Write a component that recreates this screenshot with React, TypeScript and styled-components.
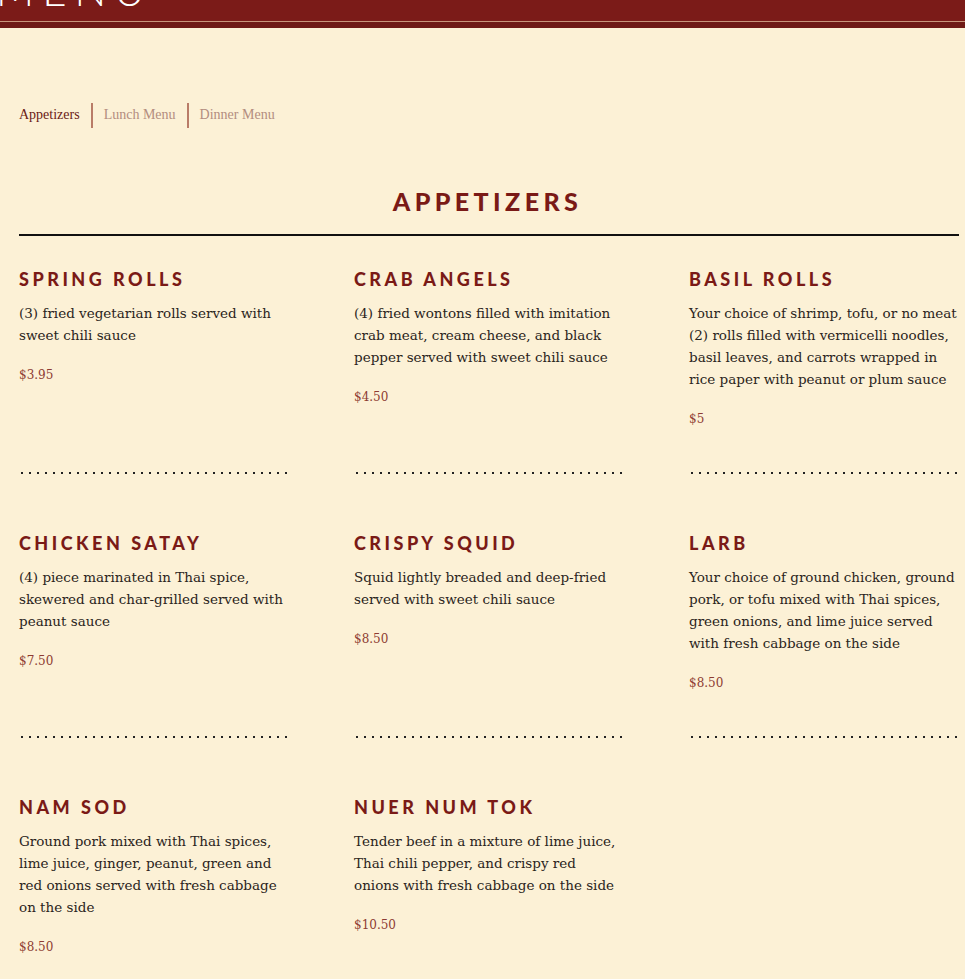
import React from "react";
import styled, { createGlobalStyle } from "styled-components";

const Global = createGlobalStyle`
  html, body { margin: 0; padding: 0; background: #fcf1d6; }
  * { box-sizing: border-box; }
`;

const Page = styled.div`
  min-height: 979px;
  background: #fcf1d6;
`;

const Header = styled.header`
  height: 22px;
  background: #7b1b18;
  overflow: hidden;
  border-bottom: 1px solid #c9967c;
`;

const HeaderBand = styled.div`
  height: 6px;
  background: #6f1a16;
`;

const Brand = styled.div`
  margin-top: -31px;
  margin-left: -4px;
  font-family: "Lato", sans-serif;
  font-weight: 300;
  font-size: 42px;
  line-height: 42px;
  letter-spacing: 8px;
  color: #ffffff;
`;

const Tabs = styled.nav`
  display: flex;
  align-items: center;
  padding: 60px 0 0 19px;
  height: 114px;
`;

const Tab = styled.span<{ $active?: boolean }>`
  font-family: "Liberation Serif", serif;
  font-size: 14px;
  color: ${(p) => (p.$active ? "#6b1a15" : "#b38d7f")};
`;

const TabBar = styled.span`
  width: 2px;
  height: 25px;
  background: #b97c68;
  margin: 0 11px 0 11px;
`;

const Title = styled.h1`
  margin: 44px 0 0;
  text-align: center;
  font-family: "Lato", sans-serif;
  font-weight: 900;
  font-size: 25px;
  line-height: 30px;
  letter-spacing: 4.4px;
  color: #7a1a16;
  padding-left: 10px;
`;

const Rule = styled.hr`
  margin: 18px 6px 0 19px;
  border: 0;
  height: 2px;
  background: #111;
`;

const Grid = styled.div`
  display: grid;
  grid-template-columns: repeat(3, 270px);
  column-gap: 65px;
  row-gap: 59px;
  padding: 33px 0 0 19px;
`;

const Item = styled.div`
  display: flex;
  flex-direction: column;
`;

const Name = styled.h2`
  margin: 0;
  font-family: "Lato", sans-serif;
  font-weight: 900;
  font-size: 18px;
  line-height: 20px;
  letter-spacing: 3.5px;
  color: #7a1a16;
`;

const Desc = styled.p`
  margin: 13px 0 0;
  font-family: "DejaVu Serif", serif;
  font-size: 13.5px;
  line-height: 22px;
  color: #2a2420;
`;

const Price = styled.div`
  margin-top: 20px;
  font-family: "DejaVu Serif", serif;
  font-size: 12px;
  line-height: 18px;
  color: #8d3b32;
`;

const Dots = styled.div`
  margin-top: auto;
  padding-top: 44px;
  height: 46px;
  background-image: linear-gradient(to right, #222 0 2px, transparent 2px 8px);
  background-size: 8px 2px;
  background-repeat: repeat-x;
  background-position: 2px bottom;
  background-origin: content-box;
  background-clip: content-box;
`;

type Dish = { name: string; desc: string; price: string; dots: boolean };

const dishes: Dish[] = [
  { name: "Spring Rolls", desc: "(3) fried vegetarian rolls served with sweet chili sauce", price: "$3.95", dots: true },
  { name: "Crab Angels", desc: "(4) fried wontons filled with imitation crab meat, cream cheese, and black pepper served with sweet chili sauce", price: "$4.50", dots: true },
  { name: "Basil Rolls", desc: "Your choice of shrimp, tofu, or no meat (2) rolls filled with vermicelli noodles, basil leaves, and carrots wrapped in rice paper with peanut or plum sauce", price: "$5", dots: true },
  { name: "Chicken Satay", desc: "(4) piece marinated in Thai spice, skewered and char-grilled served with peanut sauce", price: "$7.50", dots: true },
  { name: "Crispy Squid", desc: "Squid lightly breaded and deep-fried served with sweet chili sauce", price: "$8.50", dots: true },
  { name: "Larb", desc: "Your choice of ground chicken, ground pork, or tofu mixed with Thai spices, green onions, and lime juice served with fresh cabbage on the side", price: "$8.50", dots: true },
  { name: "Nam Sod", desc: "Ground pork mixed with Thai spices, lime juice, ginger, peanut, green and red onions served with fresh cabbage on the side", price: "$8.50", dots: false },
  { name: "Nuer Num Tok", desc: "Tender beef in a mixture of lime juice, Thai chili pepper, and crispy red onions with fresh cabbage on the side", price: "$10.50", dots: false },
];

export default function App() {
  return (
    <Page>
      <Global />
      <Header>
        <Brand>MENU</Brand>
      </Header>
      <HeaderBand />
      <Tabs>
        <Tab $active>Appetizers</Tab>
        <TabBar />
        <Tab>Lunch Menu</Tab>
        <TabBar />
        <Tab>Dinner Menu</Tab>
      </Tabs>
      <Title>APPETIZERS</Title>
      <Rule />
      <Grid>
        {dishes.map((d) => (
          <Item key={d.name}>
            <Name>{d.name.toUpperCase()}</Name>
            <Desc>{d.desc}</Desc>
            <Price>{d.price}</Price>
            {d.dots && <Dots />}
          </Item>
        ))}
      </Grid>
    </Page>
  );
}
